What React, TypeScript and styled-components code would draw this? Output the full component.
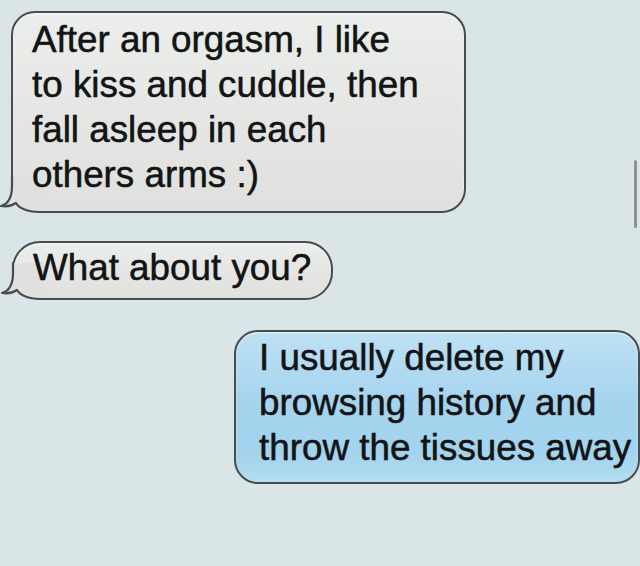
import React from "react";
import styled, { createGlobalStyle } from "styled-components";

const Global = createGlobalStyle`
  html, body { margin: 0; padding: 0; background: #dae5e7; }
  body { width: 640px; height: 566px; overflow: hidden; }
`;

const Page = styled.div`
  position: relative;
  width: 640px;
  height: 566px;
  box-sizing: border-box;
  padding-top: 11px;
  display: flex;
  flex-direction: column;
  background: #dae5e7;
  font-family: "Liberation Sans", Arial, sans-serif;
`;

const Row = styled.div<{ $side: "left" | "right"; $inset: number; $gap: number }>`
  display: flex;
  justify-content: ${(p) => (p.$side === "left" ? "flex-start" : "flex-end")};
  padding-left: ${(p) => (p.$side === "left" ? p.$inset : 0)}px;
  padding-right: ${(p) => (p.$side === "right" ? p.$inset : 0)}px;
  margin-top: ${(p) => p.$gap}px;
`;

type Variant = "grey" | "blue";

const Bubble = styled.div<{
  $variant: Variant;
  $width: number;
  $pad: string;
  $radius: number;
  $tail?: boolean;
}>`
  position: relative;
  box-sizing: border-box;
  width: ${(p) => p.$width}px;
  padding: ${(p) => p.$pad};
  border: 2px solid #474d4e;
  border-radius: ${(p) => p.$radius}px;
  ${(p) => (p.$tail ? "border-bottom-left-radius: 0;" : "")}
  background: ${(p) =>
    p.$variant === "grey"
      ? "linear-gradient(180deg, #eceeec 0%, #e5e6e4 55%, #e0e1df 100%)"
      : "linear-gradient(180deg, #bfe1f4 0%, #a6d4ef 45%, #a3d3ee 80%, #b2dcf0 100%)"};
  box-shadow: inset 0 1px 2px rgba(255, 255, 255, 0.6);
`;

const Text = styled.div`
  position: relative;
  z-index: 1;
  font-size: 36.8px;
  line-height: 45px;
  color: #121415;
  white-space: pre;
  -webkit-text-stroke: 0.35px #121415;
  text-shadow: 0 0 1px rgba(0, 0, 0, 0.4);
`;

const TailSvg = styled.svg`
  position: absolute;
  left: -14px;
  bottom: -2px;
  overflow: visible;
  z-index: 0;
`;

const Scrollbar = styled.div`
  position: absolute;
  left: 634px;
  top: 160px;
  width: 3px;
  height: 68px;
  border-radius: 2px;
  background: #8c9293;
`;

const TAIL = "M13,0 L13,10 C13,22 9,28 2,30 C8,31 14,29 17,27 C20,32 26,35.5 40,36";

function Tail({ fill }: { fill: string }) {
  return (
    <TailSvg width="44" height="37" viewBox="0 0 44 37">
      <rect x="0" y="4" width="44" height="34" fill="#dae5e7" />
      <path d={`${TAIL} L44,36 L44,0 Z`} fill={fill} />
      <path
        d={`${TAIL} L44,36`}
        fill="none"
        stroke="#474d4e"
        strokeWidth="2.2"
        strokeLinejoin="round"
        strokeLinecap="round"
      />
    </TailSvg>
  );
}

export default function App() {
  return (
    <>
      <Global />
      <Page>
        <Row $side="left" $inset={11} $gap={0}>
          <Bubble $variant="grey" $width={455} $pad="4px 10px 14px 19px" $radius={24} $tail>
            <Tail fill="#e0e1df" />
            <Text>{"After an orgasm, I like\nto kiss and cuddle, then\nfall asleep in each\nothers arms :)"}</Text>
          </Bubble>
        </Row>
        <Row $side="left" $inset={12} $gap={28}>
          <Bubble $variant="grey" $width={321} $pad="2px 10px 8px 19px" $radius={28} $tail>
            <Tail fill="#e0e1df" />
            <Text>{"What about you?"}</Text>
          </Bubble>
        </Row>
        <Row $side="right" $inset={0} $gap={30}>
          <Bubble $variant="blue" $width={406} $pad="3px 4px 12px 23px" $radius={24}>
            <Text>{"I usually delete my\nbrowsing history and\nthrow the tissues away"}</Text>
          </Bubble>
        </Row>
        <Scrollbar />
      </Page>
    </>
  );
}
